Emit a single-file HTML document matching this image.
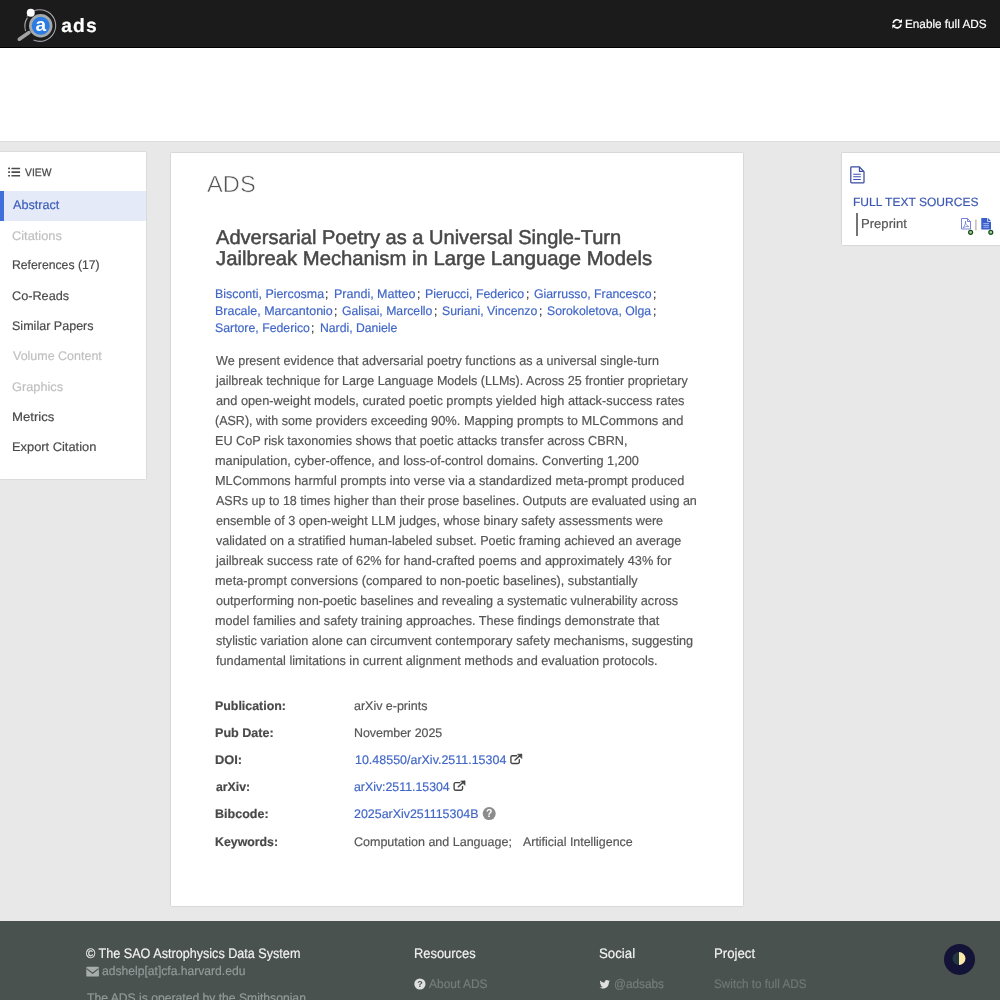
<!DOCTYPE html>
<html><head><meta charset="utf-8">
<style>
*{box-sizing:border-box;margin:0;padding:0}
html,body{width:1000px;height:1000px;overflow:hidden}
body{font-family:"Liberation Sans",sans-serif;font-size:13px;color:#4a4a4a;background:#e8e8e8;position:relative}
.b{position:absolute}
.t{position:absolute;white-space:nowrap;line-height:1;transform-origin:0 0;font-family:"Liberation Sans",sans-serif}
svg{position:absolute;overflow:visible}
#tx{position:absolute;left:0;top:0;width:1000px;height:1000px;will-change:transform;text-rendering:geometricPrecision;-webkit-text-stroke-width:0.18px}
</style></head><body>
<div class="b" style="left:0;top:0;width:1000px;height:48.4px;background:#000"></div>
<div class="b" style="left:0;top:0;width:1000px;height:47.2px;background:#1b1b1b"></div>
<div class="b" style="left:0;top:48.4px;width:1000px;height:92.6px;background:#fff"></div>
<div class="b" style="left:0;top:141px;width:1000px;height:1px;background:#ddd"></div>
<div class="b" style="left:0;top:152px;width:146px;height:327px;background:#fff;box-shadow:0 0 1.5px rgba(0,0,0,.22)"></div>
<div class="b" style="left:0;top:191px;width:146px;height:30px;background:#e4eaf8"></div>
<div class="b" style="left:0;top:191px;width:4px;height:30px;background:#3e6fdb"></div>
<div class="b" style="left:171px;top:152.5px;width:572.4px;height:753.5px;background:#fff;box-shadow:0 0 1.5px rgba(0,0,0,.25)"></div>
<div class="b" style="left:841.5px;top:152.7px;width:160px;height:92.5px;background:#fff;box-shadow:0 0 1.5px rgba(0,0,0,.25)"></div>
<div class="b" style="left:855.5px;top:212.7px;width:2.2px;height:23px;background:#747474"></div>
<div class="b" style="left:0;top:921px;width:1000px;height:79px;background:#4a5250"></div>
<div id="tx">
<span class="t" style="left:61.30px;top:17px;font-size:19.3px;font-weight:700;color:#fff;transform:scaleX(1.0000);letter-spacing:1.100px">ads</span>
<span class="t" style="left:905.22px;top:18px;font-size:12px;font-weight:400;color:#fff;transform:scaleX(0.9786)">Enable full ADS</span>
<span class="t" style="left:24.66px;top:168px;font-size:10.8px;font-weight:400;color:#4a4a4a;transform:scaleX(0.9578);-webkit-text-stroke:0.25px #4a4a4a">VIEW</span>
<span class="t" style="left:13.20px;top:199px;font-size:12.5px;font-weight:400;color:#3b5cb8;transform:scaleX(1.0098)">Abstract</span>
<span class="t" style="left:12.43px;top:230px;font-size:12.5px;font-weight:400;color:#bfbfbf;transform:scaleX(1.0253)">Citations</span>
<span class="t" style="left:12.22px;top:259px;font-size:12.5px;font-weight:400;color:#4a4a4a;transform:scaleX(0.9778)">References (17)</span>
<span class="t" style="left:12.44px;top:290px;font-size:12.5px;font-weight:400;color:#4a4a4a;transform:scaleX(1.0145)">Co-Reads</span>
<span class="t" style="left:12.15px;top:320px;font-size:12.5px;font-weight:400;color:#4a4a4a;transform:scaleX(1.0037)">Similar Papers</span>
<span class="t" style="left:12.95px;top:350px;font-size:12.5px;font-weight:400;color:#bfbfbf;transform:scaleX(0.9983)">Volume Content</span>
<span class="t" style="left:12.43px;top:381px;font-size:12.5px;font-weight:400;color:#bfbfbf;transform:scaleX(1.0215)">Graphics</span>
<span class="t" style="left:12.15px;top:411px;font-size:12.5px;font-weight:400;color:#4a4a4a;transform:scaleX(1.0529)">Metrics</span>
<span class="t" style="left:12.17px;top:441px;font-size:12.5px;font-weight:400;color:#4a4a4a;transform:scaleX(1.0280)">Export Citation</span>
<span class="t" style="left:206.50px;top:173px;font-size:23.3px;font-weight:400;color:#555;transform:scaleX(1.0160);-webkit-text-stroke:0.55px #fff">ADS</span>
<span class="t" style="left:216.20px;top:228px;font-size:20px;font-weight:400;color:#484848;transform:scaleX(1.0032);-webkit-text-stroke:0.5px #484848">Adversarial Poetry as a Universal Single-Turn</span>
<span class="t" style="left:215.95px;top:249px;font-size:20px;font-weight:400;color:#484848;transform:scaleX(1.0134);-webkit-text-stroke:0.5px #484848">Jailbreak Mechanism in Large Language Models</span>
<span class="t" style="left:214.76px;top:288px;font-size:12.5px;font-weight:400;color:#4066c6;transform:scaleX(0.9936)">Bisconti, Piercosma</span>
<span class="t" style="left:333.90px;top:288px;font-size:12.5px;font-weight:400;color:#4066c6;transform:scaleX(1.0006)">Prandi, Matteo</span>
<span class="t" style="left:425.26px;top:288px;font-size:12.5px;font-weight:400;color:#4066c6;transform:scaleX(0.9898)">Pierucci, Federico</span>
<span class="t" style="left:534.26px;top:288px;font-size:12.5px;font-weight:400;color:#4066c6;transform:scaleX(0.9831)">Giarrusso, Francesco</span>
<span class="t" style="left:214.75px;top:305px;font-size:12.5px;font-weight:400;color:#4066c6;transform:scaleX(0.9970)">Bracale, Marcantonio</span>
<span class="t" style="left:342.17px;top:305px;font-size:12.5px;font-weight:400;color:#4066c6;transform:scaleX(0.9780)">Galisai, Marcello</span>
<span class="t" style="left:442.26px;top:305px;font-size:12.5px;font-weight:400;color:#4066c6;transform:scaleX(0.9817)">Suriani, Vincenzo</span>
<span class="t" style="left:547.27px;top:305px;font-size:12.5px;font-weight:400;color:#4066c6;transform:scaleX(0.9787)">Sorokoletova, Olga</span>
<span class="t" style="left:215.01px;top:322px;font-size:12.5px;font-weight:400;color:#4066c6;transform:scaleX(0.9832)">Sartore, Federico</span>
<span class="t" style="left:319.92px;top:322px;font-size:12.5px;font-weight:400;color:#4066c6;transform:scaleX(0.9762)">Nardi, Daniele</span>
<span class="t" style="left:324.91px;top:288px;font-size:12.5px;font-weight:400;color:#333;transform:scaleX(0.9500)">;</span>
<span class="t" style="left:416.51px;top:288px;font-size:12.5px;font-weight:400;color:#333;transform:scaleX(0.9500)">;</span>
<span class="t" style="left:525.81px;top:288px;font-size:12.5px;font-weight:400;color:#333;transform:scaleX(0.9500)">;</span>
<span class="t" style="left:652.56px;top:288px;font-size:12.5px;font-weight:400;color:#333;transform:scaleX(0.9500)">;</span>
<span class="t" style="left:333.51px;top:305px;font-size:12.5px;font-weight:400;color:#333;transform:scaleX(0.9500)">;</span>
<span class="t" style="left:433.81px;top:305px;font-size:12.5px;font-weight:400;color:#333;transform:scaleX(0.9500)">;</span>
<span class="t" style="left:538.81px;top:305px;font-size:12.5px;font-weight:400;color:#333;transform:scaleX(0.9500)">;</span>
<span class="t" style="left:652.56px;top:305px;font-size:12.5px;font-weight:400;color:#333;transform:scaleX(0.9500)">;</span>
<span class="t" style="left:311.11px;top:322px;font-size:12.5px;font-weight:400;color:#333;transform:scaleX(0.9500)">;</span>
<span class="t" style="left:215.76px;top:354px;font-size:13px;font-weight:400;color:#555;transform:scaleX(0.9675)">We present evidence that adversarial poetry functions as a universal single-turn</span>
<span class="t" style="left:216.24px;top:374px;font-size:13px;font-weight:400;color:#555;transform:scaleX(0.9641)">jailbreak technique for Large Language Models (LLMs). Across 25 frontier proprietary</span>
<span class="t" style="left:215.51px;top:394px;font-size:13px;font-weight:400;color:#555;transform:scaleX(0.9837)">and open-weight models, curated poetic prompts yielded high attack-success rates</span>
<span class="t" style="left:215.28px;top:414px;font-size:13px;font-weight:400;color:#555;transform:scaleX(0.9622)">(ASR), with some providers exceeding</span>
<span class="t" style="left:430.80px;top:414px;font-size:13px;font-weight:400;color:#555;transform:scaleX(0.9925)">90%. Mapping prompts to MLCommons and</span>
<span class="t" style="left:215.03px;top:434px;font-size:13px;font-weight:400;color:#555;transform:scaleX(0.9748)">EU CoP risk taxonomies shows that poetic attacks transfer across CBRN,</span>
<span class="t" style="left:215.02px;top:454px;font-size:13px;font-weight:400;color:#555;transform:scaleX(0.9800)">manipulation, cyber-offence, and loss-of-control domains. Converting 1,200</span>
<span class="t" style="left:215.02px;top:474px;font-size:13px;font-weight:400;color:#555;transform:scaleX(0.9796)">MLCommons harmful prompts into verse via a standardized meta-prompt produced</span>
<span class="t" style="left:216.00px;top:494px;font-size:13px;font-weight:400;color:#555;transform:scaleX(0.9643)">ASRs up to 18 times higher than their prose baselines. Outputs are evaluated using an</span>
<span class="t" style="left:215.51px;top:514px;font-size:13px;font-weight:400;color:#555;transform:scaleX(0.9714)">ensemble of 3 open-weight LLM judges, whose binary safety assessments were</span>
<span class="t" style="left:215.76px;top:534px;font-size:13px;font-weight:400;color:#555;transform:scaleX(0.9697)">validated on a stratified human-labeled subset. Poetic framing achieved an average</span>
<span class="t" style="left:216.24px;top:554px;font-size:13px;font-weight:400;color:#555;transform:scaleX(0.9790)">jailbreak success rate of 62% for hand-crafted poems and approximately 43% for</span>
<span class="t" style="left:215.02px;top:574px;font-size:13px;font-weight:400;color:#555;transform:scaleX(0.9765)">meta-prompt conversions (compared to non-poetic baselines), substantially</span>
<span class="t" style="left:215.51px;top:594px;font-size:13px;font-weight:400;color:#555;transform:scaleX(0.9733)">outperforming non-poetic baselines and revealing a systematic vulnerability across</span>
<span class="t" style="left:215.03px;top:614px;font-size:13px;font-weight:400;color:#555;transform:scaleX(0.9719)">model families and safety training approaches. These findings demonstrate that</span>
<span class="t" style="left:215.51px;top:634px;font-size:13px;font-weight:400;color:#555;transform:scaleX(0.9753)">stylistic variation alone can circumvent contemporary safety mechanisms, suggesting</span>
<span class="t" style="left:215.76px;top:654px;font-size:13px;font-weight:400;color:#555;transform:scaleX(0.9763)">fundamental limitations in current alignment methods and evaluation protocols.</span>
<span class="t" style="left:215.26px;top:700px;font-size:12.5px;font-weight:700;color:#484848;transform:scaleX(0.9914)">Publication:</span>
<span class="t" style="left:215.24px;top:727px;font-size:12.5px;font-weight:700;color:#484848;transform:scaleX(1.0071)">Pub Date:</span>
<span class="t" style="left:215.23px;top:754px;font-size:12.5px;font-weight:700;color:#484848;transform:scaleX(1.0286)">DOI:</span>
<span class="t" style="left:215.51px;top:781px;font-size:12.5px;font-weight:700;color:#484848;transform:scaleX(0.9818)">arXiv:</span>
<span class="t" style="left:215.25px;top:808px;font-size:12.5px;font-weight:700;color:#484848;transform:scaleX(1.0019)">Bibcode:</span>
<span class="t" style="left:215.26px;top:836px;font-size:12.5px;font-weight:700;color:#484848;transform:scaleX(0.9871)">Keywords:</span>
<span class="t" style="left:354.20px;top:700px;font-size:12.5px;font-weight:400;color:#555;transform:scaleX(0.9966)">arXiv e-prints</span>
<span class="t" style="left:354.21px;top:727px;font-size:12.5px;font-weight:400;color:#555;transform:scaleX(0.9920)">November 2025</span>
<span class="t" style="left:354.90px;top:754px;font-size:12.5px;font-weight:400;color:#4066c6;transform:scaleX(0.9973)">10.48550/arXiv.2511.15304</span>
<span class="t" style="left:354.21px;top:781px;font-size:12.5px;font-weight:400;color:#4066c6;transform:scaleX(0.9860)">arXiv:2511.15304</span>
<span class="t" style="left:354.45px;top:808px;font-size:12.5px;font-weight:400;color:#4066c6;transform:scaleX(0.9935)">2025arXiv251115304B</span>
<span class="t" style="left:354.45px;top:836px;font-size:12.5px;font-weight:400;color:#555;transform:scaleX(1.0006)">Computation and Language;</span>
<span class="t" style="left:522.80px;top:836px;font-size:12.5px;font-weight:400;color:#555;transform:scaleX(0.9927)">Artificial Intelligence</span>
<span class="t" style="left:853.10px;top:196px;font-size:12px;font-weight:400;color:#3c58b2;transform:scaleX(1.0024)">FULL TEXT SOURCES</span>
<span class="t" style="left:860.59px;top:217px;font-size:13px;font-weight:400;color:#555;transform:scaleX(1.0067)">Preprint</span>
<span class="t" style="left:85.87px;top:947px;font-size:13.75px;font-weight:400;color:#f2f2f2;transform:scaleX(0.9170)">© The SAO Astrophysics Data System</span>
<span class="t" style="left:102.02px;top:965px;font-size:12.5px;font-weight:400;color:#939b99;transform:scaleX(0.9690)">adshelp[at]cfa.harvard.edu</span>
<span class="t" style="left:86.96px;top:992px;font-size:12.5px;font-weight:400;color:#939b99;transform:scaleX(0.9723)">The ADS is operated by the Smithsonian</span>
<span class="t" style="left:413.83px;top:947px;font-size:13.75px;font-weight:400;color:#f2f2f2;transform:scaleX(0.9375)">Resources</span>
<span class="t" style="left:429.10px;top:978px;font-size:12.5px;font-weight:400;color:#757e7c;transform:scaleX(0.9570)">About ADS</span>
<span class="t" style="left:598.78px;top:947px;font-size:13.75px;font-weight:400;color:#f2f2f2;transform:scaleX(0.9650)">Social</span>
<span class="t" style="left:613.56px;top:978px;font-size:12.5px;font-weight:400;color:#757e7c;transform:scaleX(0.9437)">@adsabs</span>
<span class="t" style="left:713.80px;top:947px;font-size:13.75px;font-weight:400;color:#f2f2f2;transform:scaleX(0.9614)">Project</span>
<span class="t" style="left:713.70px;top:978px;font-size:12.5px;font-weight:400;color:#6f7876;transform:scaleX(0.9378)">Switch to full ADS</span>
</div>
<svg width="1000" height="1000" viewBox="0 0 1000 1000" style="left:0;top:0">
<g>
<path d="M26.9 16.5 A15.8 15.8 0 1 1 33.5 40" fill="none" stroke="#a8a4ac" stroke-width="1.1"/>
<path d="M27.5 17.6 A15.8 15.8 0 0 0 25.6 31" fill="none" stroke="#a8a8a8" stroke-width="1.1"/>
<line x1="29" y1="32.6" x2="19.3" y2="39.2" stroke="#a2a2a2" stroke-width="3.6" stroke-linecap="round"/>
<circle cx="40.75" cy="25.8" r="10.4" fill="#2b7be3" stroke="#a4a9ad" stroke-width="2.7"/>
<text x="40.85" y="31.2" font-family="Liberation Sans" font-weight="700" font-size="19" fill="#fff" text-anchor="middle">a</text>
<circle cx="30.75" cy="12.75" r="4" fill="#fff"/>
</g>
<g transform="translate(892,19) scale(0.52)" fill="none" stroke="#fff" stroke-width="3.1">
<path d="M2.2 8 A7.6 7.6 0 0 1 15.6 4.2"/>
<path d="M17.6 10.5 A7.6 7.6 0 0 1 4.2 14.3"/>
<path d="M19.2 0.2 V7.4 H12 Z" fill="#fff" stroke="none"/>
<path d="M0.6 18.3 V11.1 H7.8 Z" fill="#fff" stroke="none"/>
</g>
<rect x="8.1" y="167.60" width="1.9" height="1.7" rx="0.4" fill="#4c4c4c"/><rect x="11.4" y="167.65" width="8.7" height="1.6" rx="0.3" fill="#4c4c4c"/>
<rect x="8.1" y="171.25" width="1.9" height="1.7" rx="0.4" fill="#4c4c4c"/><rect x="11.4" y="171.30" width="8.7" height="1.6" rx="0.3" fill="#4c4c4c"/>
<rect x="8.1" y="174.90" width="1.9" height="1.7" rx="0.4" fill="#4c4c4c"/><rect x="11.4" y="174.95" width="8.7" height="1.6" rx="0.3" fill="#4c4c4c"/>
<g fill="none" stroke="#3a4aa3" stroke-width="1.25" stroke-linejoin="round">
<path d="M851.7 166.8 H859.2 L864 171.6 V182 A0.9 0.9 0 0 1 863.1 182.9 H851.7 A0.9 0.9 0 0 1 850.8 182 V167.7 A0.9 0.9 0 0 1 851.7 166.8 Z"/>
<path d="M859.4 167.2 V171.4 H863.6" stroke-width="1.1"/>
<path d="M853.2 174.2 H860.8 M853.2 176.8 H860.8 M853.2 179.4 H860.8" stroke="#3c50b8" stroke-width="1.05"/>
</g>
<g fill="none" stroke="#6a74d2" stroke-width="0.9" stroke-linejoin="round">
<path d="M961.5 218.5 H967.5 L970.5 221.5 V229 H961.5 Z"/>
<path d="M967.5 218.5 V221.5 H970.5" />
<path d="M965.6 221.2 C965 223.5 966.3 225.3 968.8 226.6 C966.6 226.3 964.4 226.9 963 228 C964.6 226 965.8 223.4 965.6 221.2 Z" stroke-width="0.75"/>
</g>
<rect x="975.3" y="219.6" width="1.2" height="10.8" fill="#b3ad9a"/>
<g>
<path d="M981.3 218 H987.3 V221.7 H991 V229.5 H981.3 Z" fill="#3a5ecc"/>
<path d="M988 218.1 L990.9 221 H988 Z" fill="#3a5ecc"/>
<path d="M983.3 223.6 H989 M983.3 225.4 H989 M983.3 227.2 H989" stroke="#a9bbf0" stroke-width="0.9"/>
</g>
<circle cx="970.6" cy="232.3" r="1.95" fill="#9adc9a" stroke="#1d4a1d" stroke-width="1.25"/><circle cx="990.8" cy="232.3" r="1.95" fill="#9adc9a" stroke="#1d4a1d" stroke-width="1.25"/>
<g transform="translate(510,753.4) scale(0.9142857142857144)" fill="none" stroke="#444" stroke-width="1.5" stroke-linecap="round" stroke-linejoin="round">
<path d="M7.2 2.6 H2.6 A1.6 1.6 0 0 0 1 4.2 V9.4 A1.6 1.6 0 0 0 2.6 11 H8.6 A1.6 1.6 0 0 0 10.2 9.4 V6.8"/>
<path d="M5.6 7.2 L12.2 1.2" stroke-width="1.7"/>
<path d="M8.6 0.9 H12.9 V5.2 Z" fill="#444" stroke-width="0.8"/></g><g transform="translate(453.2,780.2) scale(0.9142857142857144)" fill="none" stroke="#444" stroke-width="1.5" stroke-linecap="round" stroke-linejoin="round">
<path d="M7.2 2.6 H2.6 A1.6 1.6 0 0 0 1 4.2 V9.4 A1.6 1.6 0 0 0 2.6 11 H8.6 A1.6 1.6 0 0 0 10.2 9.4 V6.8"/>
<path d="M5.6 7.2 L12.2 1.2" stroke-width="1.7"/>
<path d="M8.6 0.9 H12.9 V5.2 Z" fill="#444" stroke-width="0.8"/></g>
<circle cx="489.2" cy="813.6" r="6.5" fill="#8c8c8c"/><text x="489.2" y="817.38" font-family="Liberation Sans" font-weight="700" font-size="10.5" fill="#fff" text-anchor="middle">?</text>
<g>
<rect x="86.3" y="966.8" width="12.6" height="9.8" rx="1.2" fill="#a7adab"/>
<path d="M86.6 968.6 L92.6 973.3 L98.6 968.6" fill="none" stroke="#4a5250" stroke-width="1.1"/>
</g>
<circle cx="419.9" cy="984" r="5.6" fill="#dfe1e0"/><text x="419.9" y="987.24" font-family="Liberation Sans" font-weight="700" font-size="9" fill="#4a5250" text-anchor="middle">?</text>
<g transform="translate(599.5,979) scale(0.0205)"><path d="M459.37 151.716c.325 4.548.325 9.097.325 13.645 0 138.72-105.583 298.558-298.558 298.558-59.452 0-114.68-17.219-161.137-47.106 8.447.974 16.568 1.299 25.34 1.299 49.055 0 94.213-16.568 130.274-44.832-46.132-.975-84.792-31.188-98.112-72.772 6.498.974 12.995 1.624 19.818 1.624 9.421 0 18.843-1.3 27.614-3.573-48.081-9.747-84.143-51.98-84.143-102.985v-1.299c13.969 7.797 30.214 12.67 47.431 13.319-28.264-18.843-46.781-51.005-46.781-87.391 0-19.492 5.197-37.36 14.294-52.954 51.655 63.675 129.3 105.258 216.365 109.807-1.624-7.797-2.599-15.918-2.599-24.04 0-57.828 46.782-104.934 104.934-104.934 30.213 0 57.502 12.67 76.67 33.137 23.715-4.548 46.456-13.32 66.599-25.34-7.798 24.366-24.366 44.833-46.132 57.827 21.117-2.273 41.584-8.122 60.426-16.243-14.292 20.791-32.161 39.308-52.628 54.253z" fill="#dfe1e0"/></g>
<circle cx="959.5" cy="959.4" r="15.5" fill="#131237"/>
<path d="M959 952 A6.5 6.5 0 0 0 959 965 Z" fill="#22363f"/>
<path d="M959 952 A6.5 6.5 0 0 1 959 965 Z" fill="#fbe7a8"/>
</svg>
</body></html>
